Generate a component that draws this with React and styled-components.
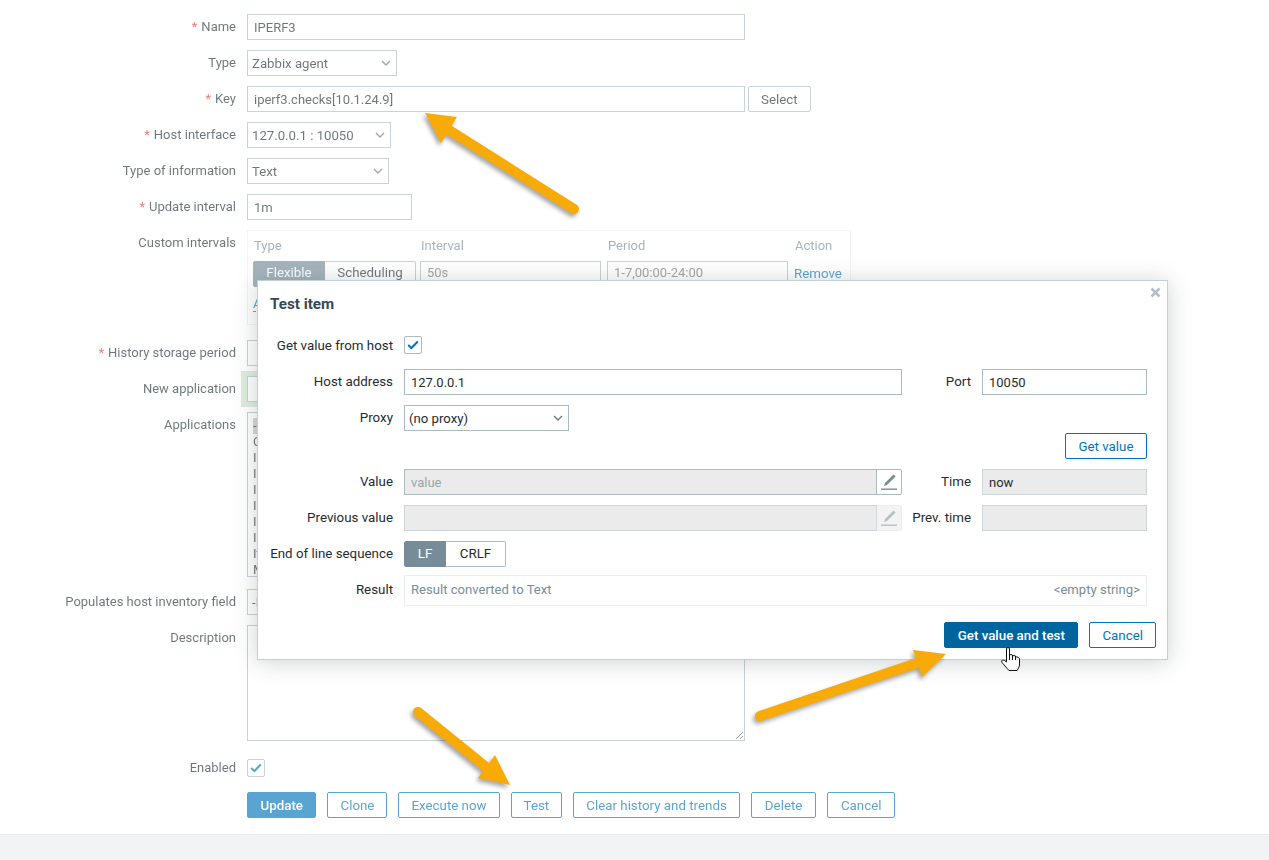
import React from "react";
import styled, { createGlobalStyle } from "styled-components";

const GlobalStyle = createGlobalStyle`
  html, body { margin: 0; padding: 0; background: #fff; }
  body { font-family: Roboto, "Liberation Sans", sans-serif; font-size: 13.33px; color: #1f2c33; }
  * { box-sizing: border-box; }
`;

const chevron = encodeURIComponent(
  '<svg xmlns="http://www.w3.org/2000/svg" width="10" height="6"><path d="M1 1l4 4 4-4" fill="none" stroke="#6f7b82" stroke-width="1.4"/></svg>'
);

const Page = styled.div`
  position: relative;
  width: 1269px;
  height: 860px;
  overflow: hidden;
  display: flex;
  flex-direction: column;
`;

const Form = styled.form`
  flex: 1;
  padding-top: 14px;
  display: flex;
  flex-direction: column;
  gap: 10px;
  opacity: 0.65;
`;

const Row = styled.div`
  display: grid;
  grid-template-columns: 236px 1fr;
  column-gap: 11px;
  margin-top: ${(p) => p.$top || 0}px;
`;

const Label = styled.label`
  height: 26px;
  line-height: 25px;
  font-size: 13px;
  text-align: right;
  white-space: nowrap;
`;

const Star = styled.span`
  color: #e33734;
  margin-right: 4px;
`;

const Field = styled.div`
  display: flex;
  align-items: flex-start;
  gap: 3px;
`;

const Input = styled.input`
  width: ${(p) => p.$w || 498}px;
  height: 26px;
  padding: 0 6px;
  border: 1px solid #acbbc2;
  background: #fff;
  color: #1f2c33;
  font: inherit;
  font-size: 13px;
  outline: none;
`;

const Highlight = styled(Input)`
  box-shadow: 0 0 0 5px #cbe4cb, -1px 0 0 5px #cbe4cb;
`;

const Select = styled.select`
  appearance: none;
  width: ${(p) => p.$w || 150}px;
  height: 26px;
  padding: 0 4px;
  border: 1px solid #acbbc2;
  border-radius: 0;
  background: #fff url("data:image/svg+xml,${chevron}") no-repeat right 5px center;
  color: #1f2c33;
  font: inherit;
  font-size: 13.2px;
  outline: none;
`;

const TextArea = styled.textarea`
  display: block;
  width: 498px;
  height: 116px;
  border: 1px solid #acbbc2;
  outline: none;
  font: inherit;
`;

const Button = styled.button`
  height: 26px;
  padding: 0 ${(p) => p.$pad || 12}px;
  border: 1px solid ${(p) => p.$fill || "#0275b8"};
  border-radius: 2px;
  background: ${(p) => (p.$primary ? p.$fill || "#0275b8" : "#fff")};
  color: ${(p) => (p.$primary ? "#fff" : "#0275b8")};
  font: inherit;
  font-weight: ${(p) => (p.$primary ? 500 : 400)};
  white-space: nowrap;
`;

const PlainButton = styled(Button)`
  border-color: #acbbc2;
  color: #1f2c33;
`;

const IntervalBox = styled.div`
  width: 604px;
  height: 95px;
  padding: 5px;
  margin-bottom: 5px;
  border: 1px solid #ebeef0;
`;

const IntervalGrid = styled.div`
  display: grid;
  grid-template-columns: 167px 187px 187px auto;
`;

const IntervalHead = styled.div`
  height: 25px;
  padding-left: 1px;
  line-height: 19px;
  font-size: 13px;
  color: #768d99;
`;

const Segments = styled.div`
  display: flex;
  width: ${(p) => p.$w}px;
  height: 26px;
`;

const Segment = styled.div`
  width: ${(p) => p.$w}px;
  line-height: ${(p) => p.$line || 24}px;
  text-align: center;
  border: 1px solid ${(p) => (p.$on ? "#768d99" : "#acbbc2")};
  background: ${(p) => (p.$on ? "#768d99" : "#fff")};
  color: ${(p) => (p.$on ? "#fff" : "#1f2c33")};
  border-radius: ${(p) => (p.$on ? "2px 0 0 2px" : "0 2px 2px 0")};
  border-left-width: ${(p) => (p.$on ? 1 : 0)}px;
`;

const GhostInput = styled(Input)`
  width: 181px;
  padding-bottom: 3px;
  color: #768d99;
`;

const TextLink = styled.a`
  color: #0275b8;
  line-height: 25px;
`;

const AddLink = styled.a`
  display: inline-block;
  margin-top: 10px;
  color: #0275b8;
  border-bottom: 1px dashed #0275b8;
  line-height: 14px;
`;

const ListBox = styled.div`
  width: 498px;
  height: 165px;
  margin-bottom: 2px;
  padding: 5px;
  border: 1px solid #acbbc2;
  font-size: 13px;
  overflow: hidden;
`;

const ListItem = styled.div`
  height: 16px;
  line-height: 16px;
  background: ${(p) => (p.$selected ? "#c4c4c4" : "transparent")};
`;

const ButtonBar = styled.div`
  display: flex;
  gap: 11px;
`;

const Footer = styled.footer`
  height: 26px;
  background: #f2f3f5;
  border-top: 1px solid #ebeef0;
`;

/* dialog lies over the form */
const Modal = styled.div`
  position: absolute;
  left: 257px;
  top: 280px;
  width: 911px;
  height: 380px;
  padding: 0 11px 0 12px;
  background: #fff;
  border: 1px solid #c5d0d6;
  box-shadow: 0 2px 22px rgba(31, 44, 51, 0.22);
`;

const ModalHead = styled.div`
  height: 52px;
  padding-top: 15px;
`;

const Title = styled.h4`
  margin: 0;
  font-size: 15.2px;
  line-height: 16px;
  font-weight: 700;
  color: #384956;
`;

const Close = styled.svg`
  position: absolute;
  right: 6px;
  top: 6px;
`;

const ModalGrid = styled.div`
  display: grid;
  grid-template-columns: 124px 498px 60px 165px;
  column-gap: 10px;
  row-gap: 10px;
  grid-auto-rows: 26px;
  align-items: center;
  margin-top: ${(p) => p.$top || 0}px;
`;

const ModalLabel = styled.label`
  padding-right: 1px;
  line-height: 26px;
  height: 26px;
  text-align: right;
  white-space: nowrap;
`;

const Wide = styled.div`
  grid-column: 2 / -1;
  display: flex;
`;

const CheckCell = styled(Wide)`
  padding-bottom: 2px;
`;

const Check = styled.span`
  display: flex;
  align-items: center;
  justify-content: center;
  width: 18px;
  height: 18px;
  border: 1px solid #acbbc2;
  border-radius: 2px;
  background: #fff;
`;

const FormCheck = styled(Check)`
  margin-top: 4px;
`;

const ActionRow = styled.div`
  display: flex;
  justify-content: flex-end;
  margin-top: 2px;
  width: 877px;
`;

const ValueInput = styled(Input)`
  flex: 1;
  width: ${(p) => p.$w || "auto"};
  min-width: 0;
  background: #ebebeb;
  color: ${(p) => (p.$muted ? "#9aa6ac" : "#1f2c33")};
  border-color: ${(p) => (p.$soft ? "#ccd5d9" : "#acbbc2")};
`;

const ValueGroup = styled.div`
  display: flex;
  width: 498px;
`;

const PenButton = styled.span`
  display: flex;
  align-items: center;
  justify-content: center;
  width: 26px;
  height: 26px;
  margin-left: -1px;
  border: 1px solid ${(p) => (p.$off ? "#d9dfe2" : "#acbbc2")};
  border-radius: 0 2px 2px 0;
  background: ${(p) => (p.$off ? "#ebebeb" : "#fff")};
  opacity: ${(p) => (p.$off ? 0.55 : 1)};
`;

const ResultRow = styled.div`
  display: grid;
  grid-template-columns: 124px 743px;
  column-gap: 10px;
  margin-top: 8px;
`;

const ResultLabel = styled(ModalLabel)`
  height: 31px;
  line-height: 30px;
`;

const Result = styled.div`
  display: flex;
  justify-content: space-between;
  align-items: center;
  height: 31px;
  padding: 0 6px 2px;
  border: 1px solid #ebeef0;
  font-size: 13.1px;
  color: #768d99;
`;

const ModalFooter = styled.div`
  display: flex;
  justify-content: flex-end;
  gap: 11px;
  margin-top: 16px;
`;

/* screenshot annotations */
const Overlay = styled.svg`
  position: absolute;
  inset: 0;
  pointer-events: none;
`;

const ArrowGroup = styled.g`
  filter: drop-shadow(-2px 3px 2px rgba(0, 0, 0, 0.35));
`;

const arrows = [
  { tail: "574,209", base: "449,130", head: "425,113 457,117 441,143" },
  { tail: "760,716", base: "917,663", head: "946,654 913,650 922,677" },
  { tail: "418,712", base: "486,767", head: "510,785 495,755 478,778" },
];

const applications = ["-None-", "CPU", "Interfaces", "Internal items", "Inventory", "IO", "IPERF3", "IPMI", "Items", "Memory"];

const Pencil = () => (
  <svg width="18" height="18" viewBox="0 0 18 18">
    <path d="M13.6 1.5 15.6 3.5 7 12 4 13 5 10Z" fill="#768d99" />
    <rect x="1" y="15.5" width="16" height="1.4" fill="#768d99" />
  </svg>
);

const Tick = () => (
  <svg width="12" height="10" viewBox="0 0 12 10">
    <path d="M1.2 5 4.4 8 10.8 1.5" fill="none" stroke="#0275b8" strokeWidth="2" />
  </svg>
);

const Required = ({ children }) => (
  <Label>
    <Star>*</Star>
    {children}
  </Label>
);

const App = () => {
  return (
    <Page>
      <GlobalStyle />
      <Form>
        <Row>
          <Required>Name</Required>
          <Field><Input defaultValue="IPERF3" /></Field>
        </Row>
        <Row>
          <Label>Type</Label>
          <Field><Select $w={150}><option>Zabbix agent</option></Select></Field>
        </Row>
        <Row>
          <Required>Key</Required>
          <Field>
            <Input defaultValue="iperf3.checks[10.1.24.9]" />
            <PlainButton type="button">Select</PlainButton>
          </Field>
        </Row>
        <Row>
          <Required>Host interface</Required>
          <Field><Select $w={144}><option>127.0.0.1 : 10050</option></Select></Field>
        </Row>
        <Row>
          <Label>Type of information</Label>
          <Field><Select $w={142}><option>Text</option></Select></Field>
        </Row>
        <Row>
          <Required>Update interval</Required>
          <Field><Input $w={165} defaultValue="1m" /></Field>
        </Row>
        <Row>
          <Label>Custom intervals</Label>
          <IntervalBox>
            <IntervalGrid>
              <IntervalHead>Type</IntervalHead>
              <IntervalHead>Interval</IntervalHead>
              <IntervalHead>Period</IntervalHead>
              <IntervalHead>Action</IntervalHead>
              <Segments $w={163}>
                <Segment $on $w={72} $line={21}>Flexible</Segment>
                <Segment $w={91} $line={21}>Scheduling</Segment>
              </Segments>
              <GhostInput placeholder="50s" />
              <GhostInput placeholder="1-7,00:00-24:00" />
              <TextLink>Remove</TextLink>
            </IntervalGrid>
            <AddLink>Add</AddLink>
          </IntervalBox>
        </Row>
        <Row>
          <Required>History storage period</Required>
          <Field><Input $w={300} /></Field>
        </Row>
        <Row>
          <Label>New application</Label>
          <Field><Highlight /></Field>
        </Row>
        <Row>
          <Label>Applications</Label>
          <ListBox>
            {applications.map((name, i) => (
              <ListItem key={name} $selected={i === 0}>{name}</ListItem>
            ))}
          </ListBox>
        </Row>
        <Row>
          <Label>Populates host inventory field</Label>
          <Field><Select $w={300}><option>-None-</option></Select></Field>
        </Row>
        <Row>
          <Label>Description</Label>
          <Field><TextArea /></Field>
        </Row>
        <Row $top={4}>
          <Label>Enabled</Label>
          <Field><FormCheck><Tick /></FormCheck></Field>
        </Row>
        <Row $top={1}>
          <span />
          <ButtonBar>
            <Button type="button" $primary $pad={12.5}>Update</Button>
            <Button type="button">Clone</Button>
            <Button type="button">Execute now</Button>
            <Button type="button">Test</Button>
            <Button type="button">Clear history and trends</Button>
            <Button type="button" $pad={13}>Delete</Button>
            <Button type="button" $pad={12.5}>Cancel</Button>
          </ButtonBar>
        </Row>
      </Form>
      <Footer />

      <Modal>
        <ModalHead>
          <Title>Test item</Title>
          <Close width="11" height="11" viewBox="0 0 11 11">
            <path d="M1.5 1.5 9.5 9.5M9.5 1.5 1.5 9.5" stroke="#b4c0c7" strokeWidth="2.6" />
          </Close>
        </ModalHead>

        <ModalGrid>
          <ModalLabel>Get value from host</ModalLabel>
          <CheckCell><Check><Tick /></Check></CheckCell>
          <ModalLabel>Host address</ModalLabel>
          <Input defaultValue="127.0.0.1" />
          <ModalLabel>Port</ModalLabel>
          <Input $w={165} defaultValue="10050" />
          <ModalLabel>Proxy</ModalLabel>
          <Wide><Select $w={165}><option>(no proxy)</option></Select></Wide>
        </ModalGrid>

        <ActionRow>
          <Button type="button" $pad={12.5}>Get value</Button>
        </ActionRow>

        <ModalGrid $top={10}>
          <ModalLabel>Value</ModalLabel>
          <ValueGroup>
            <ValueInput $muted readOnly defaultValue="value" />
            <PenButton><Pencil /></PenButton>
          </ValueGroup>
          <ModalLabel>Time</ModalLabel>
          <ValueInput $soft readOnly defaultValue="now" />
          <ModalLabel>Previous value</ModalLabel>
          <ValueGroup>
            <ValueInput $soft readOnly />
            <PenButton $off><Pencil /></PenButton>
          </ValueGroup>
          <ModalLabel>Prev. time</ModalLabel>
          <ValueInput $soft readOnly />
          <ModalLabel>End of line sequence</ModalLabel>
          <Wide>
            <Segments $w={102}>
              <Segment $on $w={42}>LF</Segment>
              <Segment $w={60}>CRLF</Segment>
            </Segments>
          </Wide>
        </ModalGrid>

        <ResultRow>
          <ResultLabel>Result</ResultLabel>
          <Result>
            <span>Result converted to Text</span>
            <span>&lt;empty string&gt;</span>
          </Result>
        </ResultRow>

        <ModalFooter>
          <Button type="button" $primary $fill="#00649f" $pad={12.5}>Get value and test</Button>
          <Button type="button">Cancel</Button>
        </ModalFooter>
      </Modal>

      <Overlay width="1269" height="860" viewBox="0 0 1269 860">
        {arrows.map((a) => {
          const [x1, y1] = a.tail.split(",");
          const [x2, y2] = a.base.split(",");
          return (
            <ArrowGroup key={a.tail}>
              <line x1={x1} y1={y1} x2={x2} y2={y2} stroke="#f8aa08" strokeWidth="10" strokeLinecap="round" />
              <polygon points={a.head} fill="#f8aa08" />
            </ArrowGroup>
          );
        })}
        <path
          d="M1006.5 662V649Q1006.5 647.5 1008 647.5Q1009.5 647.5 1009.5 649V655Q1011 654 1012.5 655V656Q1014 655 1015.5 656V657Q1017 656.5 1018.5 657.5Q1019.5 658 1019.5 660V665Q1019 668 1017 670.5H1009Q1007.5 669 1005 666L1002 662.5Q1001 660.5 1002.5 660Q1004 659.5 1006.5 662Z"
          fill="#fff"
          stroke="#111"
          strokeWidth="1"
        />
        <path d="M1009.5 655V660M1012.5 656V660M1015.5 657V660" fill="none" stroke="#111" strokeWidth="1" />
      </Overlay>
    </Page>
  );
};

export default App;
